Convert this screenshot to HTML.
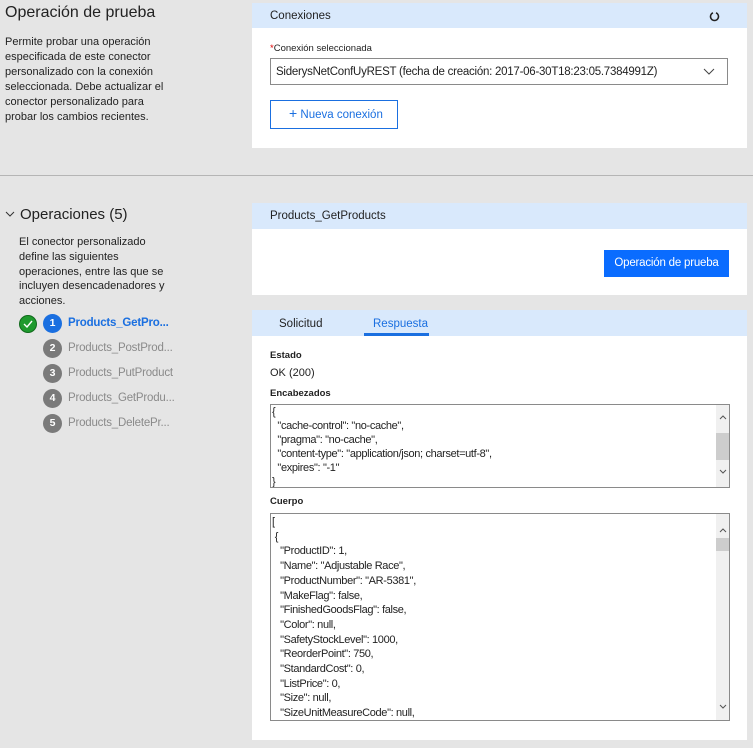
<!DOCTYPE html>
<html><head><meta charset="utf-8"><style>
*{margin:0;padding:0;box-sizing:border-box}
body{width:753px;height:748px;background:#e5e5e5;font-family:"Liberation Sans",sans-serif;color:#222;position:relative;overflow:hidden;font-size:11px}
.a{position:absolute}
.panel{position:absolute;left:252px;width:495px;background:#fff}
.hd{height:25px;background:#d9e9fc;padding:7px 0 0 18px;font-size:11.5px;color:#222}
.box{position:absolute;border:1px solid #8a8a8a;background:#fff}
.code{font-size:11px;letter-spacing:-0.35px;line-height:14.7px;color:#222;white-space:pre;padding-left:1px;overflow:hidden}
.sb{position:absolute;right:0;top:0;bottom:0;width:13px;background:#f0f0f0}
.step{position:absolute;left:43px;width:19px;height:19px;border-radius:50%;background:#7a7a7a;color:#fff;font-size:10.5px;font-weight:bold;text-align:center;line-height:19px}
.sl{position:absolute;left:68px;font-size:11.5px;letter-spacing:-0.2px;color:#8a8a8a}
</style></head><body>
<div class="a" style="left:5px;top:4px;font-size:16px;color:#222">Operación de prueba</div>
<div class="a" style="left:5px;top:35px;width:168px;font-size:11px;line-height:15px;color:#222">Permite probar una operación especificada de este conector personalizado con la conexión seleccionada. Debe actualizar el conector personalizado para probar los cambios recientes.</div>

<div class="panel" style="top:3px;height:145px">
 <div class="hd">Conexiones</div>
 <svg class="a" style="left:457px;top:8px" width="11" height="11" viewBox="0 0 11 11"><path d="M7 1.8a4 4 0 1 1-3 0" fill="none" stroke="#222" stroke-width="1.5"/></svg>
 <div class="a" style="left:18px;top:40px;font-size:9.5px"><span style="color:#d00">*</span>Conexión seleccionada</div>
 <div class="box" style="left:18px;top:55px;width:458px;height:27px;font-size:11.5px;letter-spacing:-0.25px;padding:7px 0 0 5px">SiderysNetConfUyREST (fecha de creación: 2017-06-30T18:23:05.7384991Z)
  <svg class="a" style="right:12px;top:9px" width="12" height="8" viewBox="0 0 12 8"><path d="M1 1l5 5 5-5" fill="none" stroke="#444" stroke-width="1"/></svg></div>
 <div class="box" style="left:18px;top:97px;width:128px;height:29px;border-color:#1a6fe0;color:#1a6fe0;font-size:11.5px;padding:7px 0 0 18px"><span style="font-size:14px;line-height:10px">+</span> Nueva conexión</div>
</div>

<div class="a" style="left:0;top:175px;width:753px;height:1px;background:#b5b5b5"></div>

<svg class="a" style="left:5px;top:211px" width="10" height="7" viewBox="0 0 10 7"><path d="M1 1l4 4 4-4" fill="none" stroke="#333" stroke-width="1"/></svg>
<div class="a" style="left:20px;top:206px;font-size:15px;color:#222">Operaciones (5)</div>
<div class="a" style="left:19px;top:235px;width:150px;font-size:11px;line-height:14.8px;color:#222">El conector personalizado define las siguientes operaciones, entre las que se incluyen desencadenadores y acciones.</div>
<div class="a" style="left:19px;top:315px;width:18px;height:18px;border-radius:50%;background:#1f9a2e;border:1px solid #116a1c"></div>
<svg class="a" style="left:23px;top:320px" width="10" height="8" viewBox="0 0 10 8"><path d="M1 4l3 3 5-6" fill="none" stroke="#fff" stroke-width="1.4"/></svg>
<div class="step" style="top:314px;background:#1a6fe0">1</div><div class="sl" style="top:317px;color:#1a6fe0;font-weight:bold">Products_GetPro...</div>
<div class="step" style="top:339px">2</div><div class="sl" style="top:342px">Products_PostProd...</div>
<div class="step" style="top:364px">3</div><div class="sl" style="top:367px">Products_PutProduct</div>
<div class="step" style="top:389px">4</div><div class="sl" style="top:392px">Products_GetProdu...</div>
<div class="step" style="top:414px">5</div><div class="sl" style="top:417px">Products_DeletePr...</div>

<div class="panel" style="top:203px;height:92px">
 <div class="hd" style="height:26px">Products_GetProducts</div>
 <div class="a" style="left:352px;top:47px;width:125px;height:27px;background:#0a6cff;color:#fff;font-size:11.5px;letter-spacing:-0.2px;text-align:center;line-height:27px">Operación de prueba</div>
</div>

<div class="panel" style="top:310px;height:430px">
 <div class="hd" style="height:26px;padding:0"></div>
 <div class="a" style="left:27px;top:8px;font-size:11.5px">Solicitud</div>
 <div class="a" style="left:121px;top:8px;font-size:11.5px;color:#1a6fe0">Respuesta</div>
 <div class="a" style="left:112px;top:23px;width:65px;height:3px;background:#1a6fe0"></div>
 <div class="a" style="left:18px;top:40px;font-size:9.5px;font-weight:bold">Estado</div>
 <div class="a" style="left:18px;top:57px;font-size:11px">OK (200)</div>
 <div class="a" style="left:18px;top:78px;font-size:9.5px;font-weight:bold">Encabezados</div>
 <div class="box code" style="left:18px;top:94px;width:460px;height:84px;line-height:14px;padding-top:0">{
  "cache-control": "no-cache",
  "pragma": "no-cache",
  "content-type": "application/json; charset=utf-8",
  "expires": "-1"
}<div class="sb"><div class="a" style="left:0;top:28px;width:13px;height:27px;background:#cdcdcd"></div><svg class="a" style="left:3px;top:10px" width="8" height="5" viewBox="0 0 8 5"><path d="M1 4l3-3 3 3" fill="none" stroke="#555"/></svg><svg class="a" style="left:3px;top:64px" width="8" height="5" viewBox="0 0 8 5"><path d="M1 1l3 3 3-3" fill="none" stroke="#555"/></svg></div></div>
 <div class="a" style="left:18px;top:186px;font-size:9.5px;font-weight:bold">Cuerpo</div>
 <div class="box code" style="left:18px;top:203px;width:460px;height:208px;padding-top:1px">[
 {
   "ProductID": 1,
   "Name": "Adjustable Race",
   "ProductNumber": "AR-5381",
   "MakeFlag": false,
   "FinishedGoodsFlag": false,
   "Color": null,
   "SafetyStockLevel": 1000,
   "ReorderPoint": 750,
   "StandardCost": 0,
   "ListPrice": 0,
   "Size": null,
   "SizeUnitMeasureCode": null,
   "WeightUnitMeasureCode": null,<div class="sb"><div class="a" style="left:0;top:24px;width:13px;height:13px;background:#cdcdcd"></div><svg class="a" style="left:3px;top:14px" width="8" height="5" viewBox="0 0 8 5"><path d="M1 4l3-3 3 3" fill="none" stroke="#555"/></svg><svg class="a" style="left:3px;top:190px" width="8" height="5" viewBox="0 0 8 5"><path d="M1 1l3 3 3-3" fill="none" stroke="#555"/></svg></div></div>
</div>
</body></html>
